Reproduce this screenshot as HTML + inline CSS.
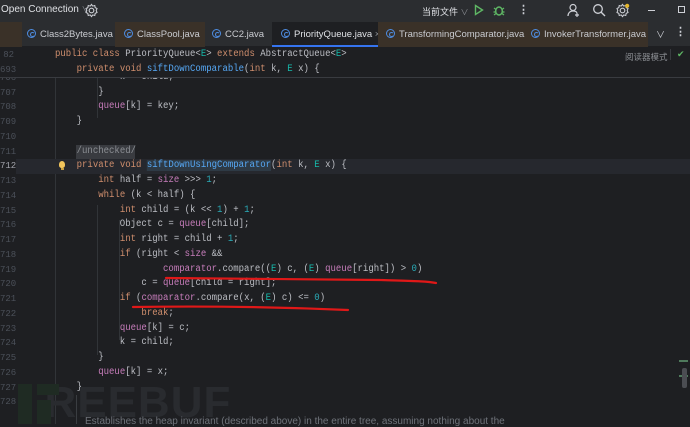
<!DOCTYPE html>
<html><head><meta charset="utf-8"><style>
*{margin:0;padding:0;box-sizing:border-box}
body{width:690px;height:424px;overflow:hidden;background:#1e1f22;font-family:"Liberation Sans","Noto Sans CJK SC",sans-serif;position:relative;color:#bcbec4}
.top{position:absolute;left:0;top:0;width:690px;height:22px;background:#2b2d30;font-size:10px;color:#dfe1e5}
.tabs{position:absolute;left:0;top:22px;width:690px;height:25px;background:#2b2d30;border-bottom:1px solid #1e1f22}
.tab{position:absolute;top:0;height:25px;font-size:9.5px;color:#c9cbd0;line-height:25px;white-space:nowrap}
.ic{display:inline-block;width:9px;height:9px;border:1.3px solid #4e8ce0;border-radius:50%;vertical-align:-1px;margin-right:4px;position:relative}
.ic:after{content:"";position:absolute;left:1.5px;top:1.5px;width:3px;height:3px;border:1px solid #4e8ce0;border-right-color:transparent;border-radius:50%}
.code{position:absolute;font-family:"Liberation Mono",monospace;font-size:10px;white-space:pre;line-height:14px;transform:scaleX(0.9);transform-origin:0 0}
.ln{position:absolute;left:0;width:14px;text-align:right;font-family:"Liberation Mono",monospace;font-size:9px;color:#4b5059;line-height:14px}
.k{color:#cf8e6d}.m{color:#56a8f5}.f{color:#c77dbb}.n{color:#2aacb8}.t{color:#16baac}
.g{position:absolute;width:1px;background:#313438}
</style></head><body>
<div class="top">
<span style="position:absolute;left:1px;top:4px">Open Connection <span style="color:#8c8f94;font-size:8px">∨</span></span>
<svg style="position:absolute;left:84px;top:3px" width="15" height="15" viewBox="0 0 16 16"><circle cx="8" cy="8" r="2.5" fill="none" stroke="#ced0d6" stroke-width="1.2"/><path d="M8 1.5l1.3 1.8 2.2-.6.4 2.2 2 1-.9 2.1.9 2.1-2 1-.4 2.2-2.2-.6L8 14.5l-1.3-1.8-2.2.6-.4-2.2-2-1 .9-2.1-.9-2.1 2-1 .4-2.2 2.2.6z" fill="none" stroke="#ced0d6" stroke-width="1.1"/></svg>
<span style="position:absolute;left:422px;top:5px;font-size:9px">当前文件 <span style="color:#8c8f94;font-size:8px">∨</span></span>
<svg style="position:absolute;left:474px;top:4px" width="10" height="12"><path d="M1.5 1.5L8.5 6 1.5 10.5z" fill="none" stroke="#5fb865" stroke-width="1.4"/></svg>
<svg style="position:absolute;left:493px;top:4px" width="12" height="12"><ellipse cx="6" cy="7" rx="3.3" ry="4" fill="none" stroke="#5fb865" stroke-width="1.4"/><path d="M1 4l2 1.5M11 4L9 5.5M0.5 8h2M9.5 8h2M1 11l2-1.5M11 11l-2-1.5" stroke="#5fb865" stroke-width="1.2"/></svg>
<span style="position:absolute;left:518px;top:3px;color:#ced0d6;font-size:11px;font-weight:bold">⋮</span>
<svg style="position:absolute;left:567px;top:3px" width="14" height="14"><circle cx="6" cy="4.5" r="3" fill="none" stroke="#ced0d6" stroke-width="1.2"/><path d="M1 13c0-3 2-5 5-5s3.5 1 4 2M10 10v4M8 12h4" fill="none" stroke="#ced0d6" stroke-width="1.2"/></svg>
<svg style="position:absolute;left:592px;top:3px" width="14" height="14"><circle cx="6" cy="6" r="4.3" fill="none" stroke="#ced0d6" stroke-width="1.3"/><path d="M9.2 9.2L13 13" stroke="#ced0d6" stroke-width="1.4"/></svg>
<svg style="position:absolute;left:615px;top:3px" width="15" height="15" viewBox="0 0 16 16"><circle cx="8" cy="8" r="2.5" fill="none" stroke="#ced0d6" stroke-width="1.2"/><path d="M8 1.5l1.3 1.8 2.2-.6.4 2.2 2 1-.9 2.1.9 2.1-2 1-.4 2.2-2.2-.6L8 14.5l-1.3-1.8-2.2.6-.4-2.2-2-1 .9-2.1-.9-2.1 2-1 .4-2.2 2.2.6z" fill="none" stroke="#ced0d6" stroke-width="1.1"/><circle cx="13" cy="3" r="2.2" fill="#e5b72c"/></svg>
<div style="position:absolute;left:648px;top:10px;width:7px;height:1px;background:#ced0d6"></div>
<div style="position:absolute;left:678px;top:6px;width:7px;height:7px;border:1px solid #ced0d6"></div>
</div>
<div class="tabs">
<div class="tab" style="left:0;width:22px;background:#3a3128"></div>
<div class="tab" style="left:27px"><span class="ic"></span>Class2Bytes.java</div>
<div class="tab" style="left:115px;width:90px;background:#3a3128;padding-left:9px"><span class="ic"></span>ClassPool.java</div>
<div class="tab" style="left:212px"><span class="ic"></span>CC2.java</div>
<div class="tab" style="left:272px;width:106px;background:#1e1f22;padding-left:9px;border-bottom:2px solid #3574f0;color:#dfe1e5"><span class="ic"></span>PriorityQueue.java <span style="color:#8c8f94">×</span></div>
<div class="tab" style="left:378px;width:270px;background:#3a3128;padding-left:8px"><span class="ic"></span>TransformingComparator.java</div>
<div class="tab" style="left:531px"><span class="ic"></span>InvokerTransformer.java</div>
<span style="position:absolute;left:656px;top:6px;color:#ced0d6;font-size:9px">∨</span>
<span style="position:absolute;left:675px;top:3px;color:#ced0d6;font-size:11px;font-weight:bold">⋮</span>
</div>
<!-- sticky header -->
<div style="position:absolute;left:0;top:47px;width:690px;height:31px;background:#1e1f22;border-bottom:1.5px solid #393b40;z-index:3">
<div class="ln" style="top:1px">82</div>
<div class="code" style="left:55px;top:1px"><span class="k">public class </span>PriorityQueue&lt;<span class="t">E</span>&gt; <span class="k">extends </span>AbstractQueue&lt;<span class="t">E</span>&gt;</div>
<div class="ln" style="top:16px">693</div>
<div class="code" style="left:55px;top:16px">    <span class="k">private void </span><span class="m">siftDownComparable</span>(<span class="k">int </span>k, <span class="t">E </span>x) {</div>
<span style="position:absolute;left:625px;top:4px;font-size:8.5px;color:#8c8f94">阅读器模式</span>
<div style="position:absolute;left:670px;top:2px;width:1px;height:11px;background:#393b40"></div>
<span style="position:absolute;left:677px;top:2px;font-size:9px;color:#5fb865">✔</span>
</div>
<div class="g" style="left:55px;top:78px;height:346px"></div>
<div class="g" style="left:97px;top:78px;height:40px"></div>
<div class="g" style="left:97px;top:205px;height:150px"></div>
<div class="g" style="left:119px;top:220px;height:120px"></div>
<div class="g" style="left:76px;top:395px;height:29px;background:#3a3d41"></div>
<div style="position:absolute;left:16px;top:159px;width:674px;height:15px;background:#26282e"></div>
<div style="position:absolute;left:76px;top:145px;width:59px;height:14px;background:#393b40"></div>
<div id="lines"></div>
<div style="position:absolute;left:59px;top:161px;width:6px;height:7px;background:#f2c55c;border-radius:50% 50% 40% 40%"></div>
<div style="position:absolute;left:61px;top:168px;width:3px;height:2px;background:#c9a040"></div>
<svg style="position:absolute;left:0;top:0;z-index:2" width="690" height="424"><path d="M166 278 C220 279 300 279 380 280 C410 281 425 281 436 283" fill="none" stroke="#e01818" stroke-width="2.2" stroke-linecap="round"/><path d="M133 307 C200 306 280 307 348 310" fill="none" stroke="#e01818" stroke-width="2.2" stroke-linecap="round"/></svg>
<div style="position:absolute;left:18px;top:383px;font-family:'Liberation Sans',sans-serif;font-weight:bold;font-size:44px;color:#292b2f;letter-spacing:1px;line-height:40px">&nbsp;&nbsp;REEBUF</div>
<div style="position:absolute;left:18px;top:384px;width:14px;height:40px;background:#1f2b23"></div>
<div style="position:absolute;left:37px;top:384px;width:22px;height:11px;background:#1f2b23"></div>
<div style="position:absolute;left:37px;top:400px;width:14px;height:24px;background:#1f2b23"></div>
<div style="position:absolute;left:85px;top:416px;font-size:10px;color:#6f737a;white-space:nowrap">Establishes the heap invariant (described above) in the entire tree, assuming nothing about the</div>
<div style="position:absolute;left:679px;top:360px;width:9px;height:2px;background:#4f7a5c"></div>
<div style="position:absolute;left:679px;top:375px;width:9px;height:2px;background:#4f7a5c"></div>
<div style="position:absolute;left:682px;top:368px;width:5px;height:20px;background:#4b4d52;border-radius:2px"></div>
<script>
var L=[
[706,'            k = child;'],
[707,'        }'],
[708,'        <span class="f">queue</span>[k] = key;'],
[709,'    }'],
[710,''],
[711,'    <span style="color:#8c8f94">/unchecked/</span>'],
[712,'    <span class="k">private void </span><span class="m" style="background:#2e3a45">siftDownUsingComparator</span>(<span class="k">int </span>k, <span class="t">E </span>x) {'],
[713,'        <span class="k">int </span>half = <span class="f">size </span>&gt;&gt;&gt; <span class="n">1</span>;'],
[714,'        <span class="k">while </span>(k &lt; half) {'],
[715,'            <span class="k">int </span>child = (k &lt;&lt; <span class="n">1</span>) + <span class="n">1</span>;'],
[716,'            Object c = <span class="f">queue</span>[child];'],
[717,'            <span class="k">int </span>right = child + <span class="n">1</span>;'],
[718,'            <span class="k">if </span>(right &lt; <span class="f">size </span>&amp;&amp;'],
[719,'                    <span class="f">comparator</span>.compare((<span class="t">E</span>) c, (<span class="t">E</span>) <span class="f">queue</span>[right]) &gt; <span class="n">0</span>)'],
[720,'                c = <span class="f">queue</span>[child = right];'],
[721,'            <span class="k">if </span>(<span class="f">comparator</span>.compare(x, (<span class="t">E</span>) c) &lt;= <span class="n">0</span>)'],
[722,'                <span class="k">break</span>;'],
[723,'            <span class="f">queue</span>[k] = c;'],
[724,'            k = child;'],
[725,'        }'],
[726,'        <span class="f">queue</span>[k] = x;'],
[727,'    }'],
[728,'']];
var h='';
L.forEach(function(a){var c=122+(a[0]-709)*14.75-7;
h+='<div class="ln" style="top:'+c+'px'+(a[0]==712?';color:#a1a3ab':'')+'">'+a[0]+'</div>';
h+='<div class="code" style="left:55px;top:'+c+'px">'+a[1]+'</div>';});
document.getElementById('lines').innerHTML=h;
</script>
</body></html>
